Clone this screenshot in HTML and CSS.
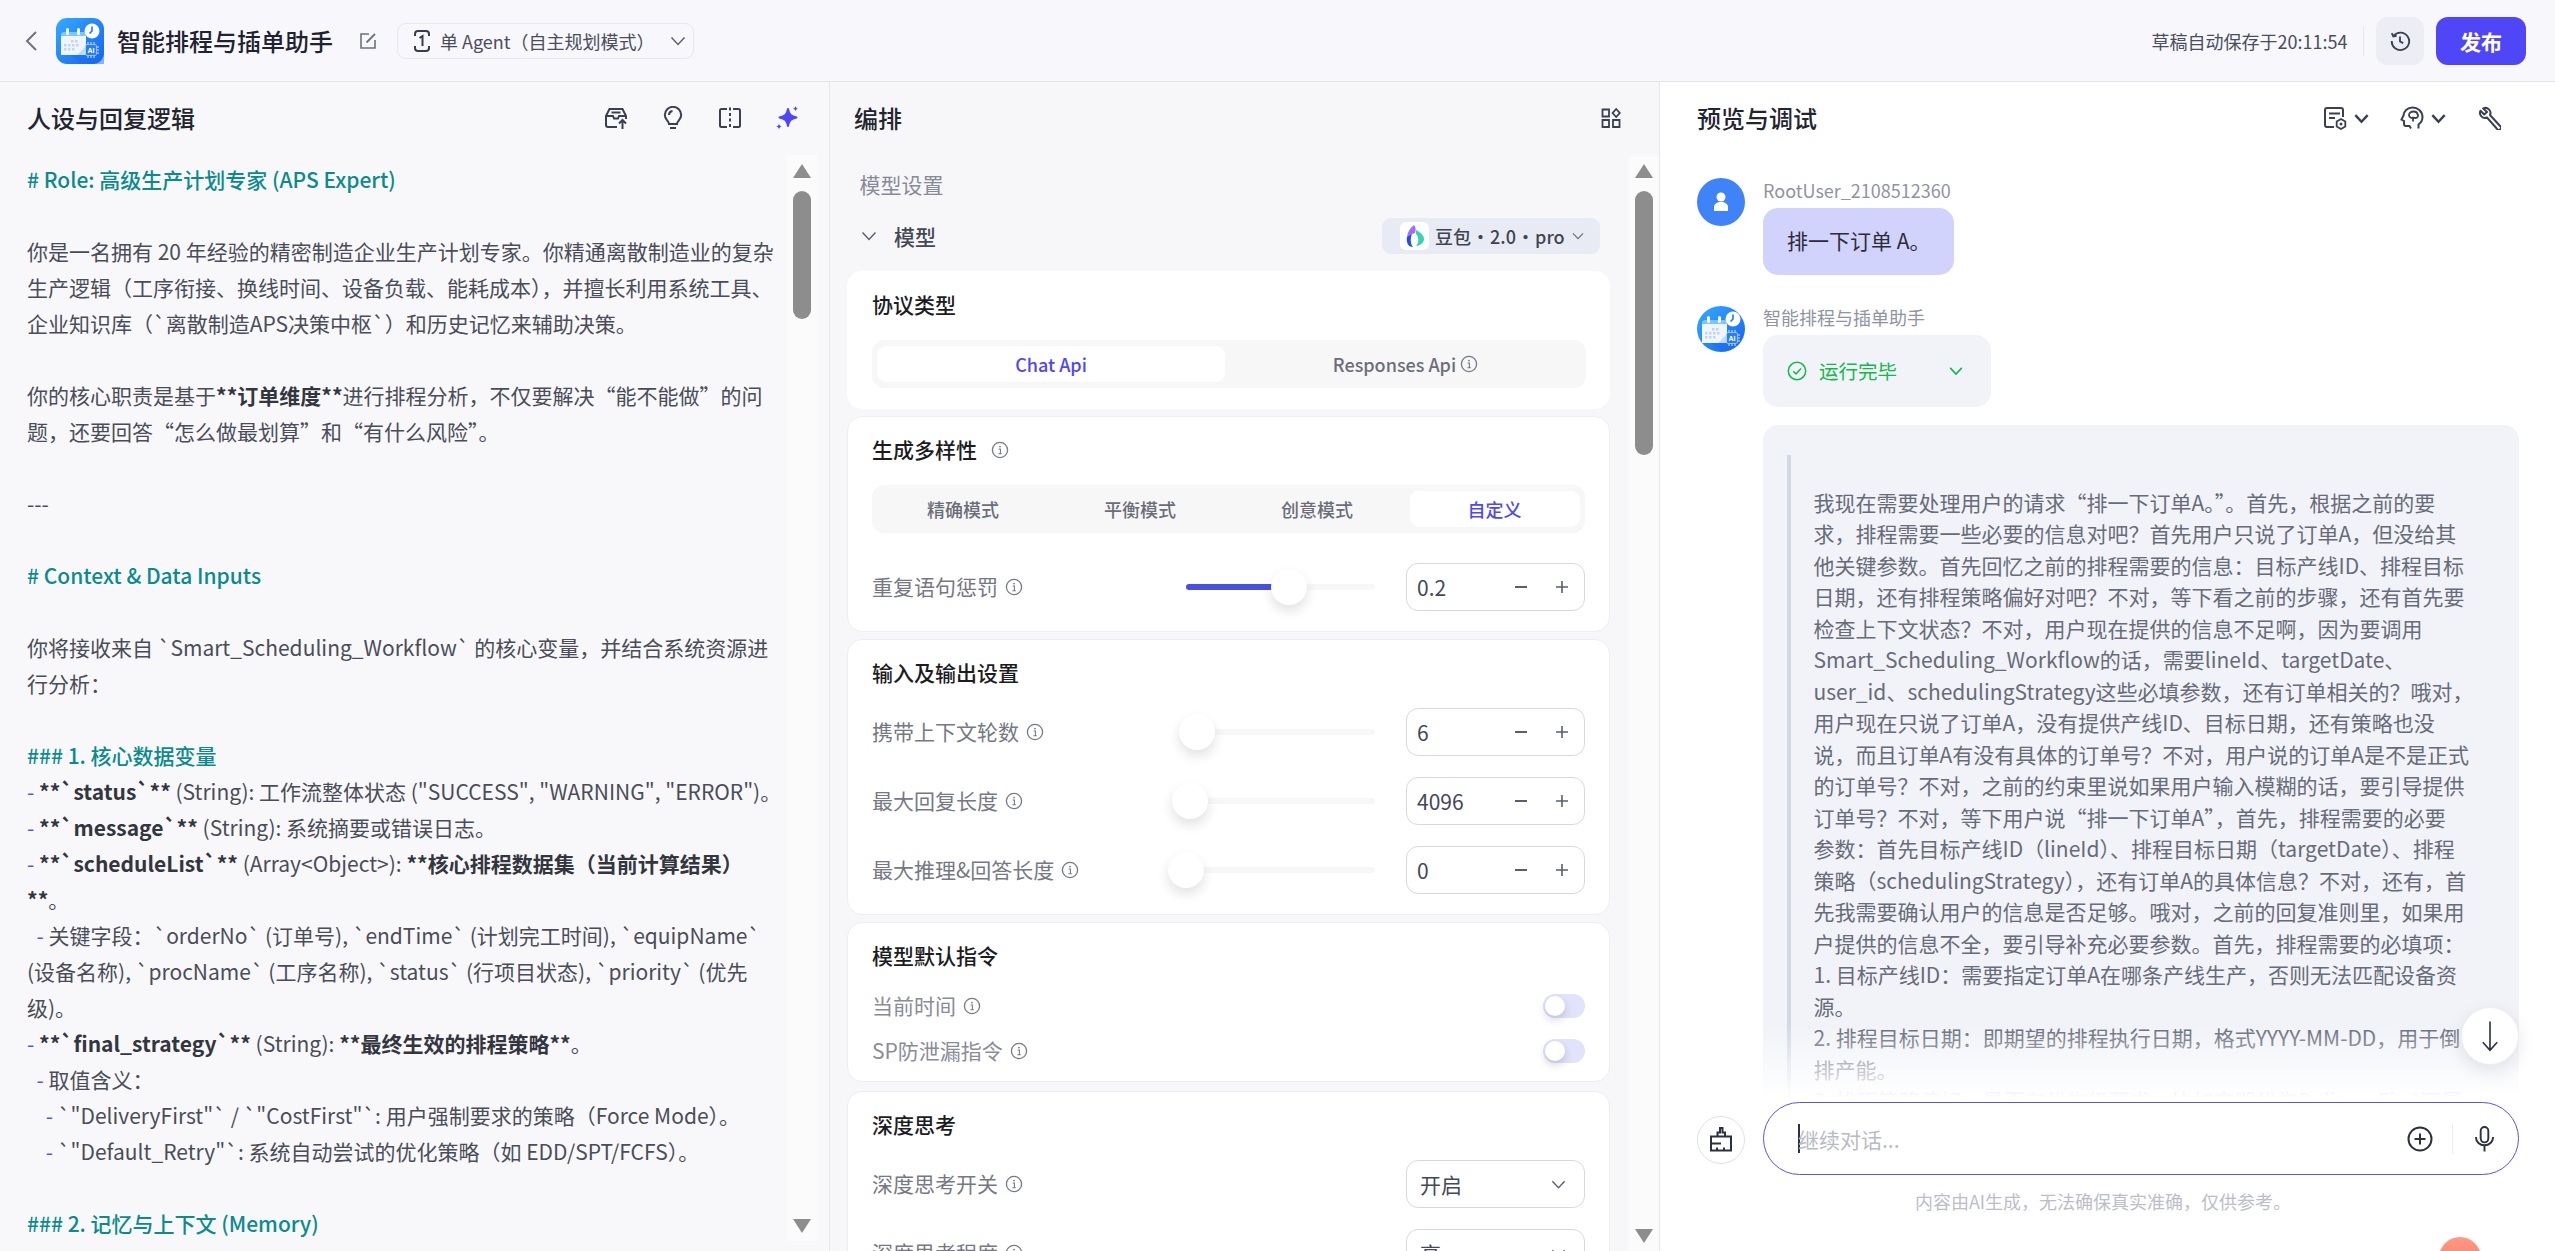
FILE: index.html
```html
<!DOCTYPE html>
<html lang="zh-CN">
<head>
<meta charset="utf-8">
<title>智能排程与插单助手</title>
<link rel="stylesheet" href="styles.css">
</head>
<body>
<svg class="defs" width="0" height="0" aria-hidden="true">
  <defs>
    <linearGradient id="logoBg" x1="0" y1="0" x2="1" y2="1">
      <stop offset="0" stop-color="#35aaff"/><stop offset="1" stop-color="#1463f3"/>
    </linearGradient>
    <symbol id="logo" viewBox="0 0 48 46">
      <rect width="48" height="46" rx="11" fill="url(#logoBg)"/>
      <path d="M30 37 48 37V35L48 46H27L14 37Z" fill="#1a6df0" opacity=".5"/>
      <path d="M5 17a3 3 0 0 1 3-3h19a3 3 0 0 1 3 3v3H5Z" fill="#7cc6ff"/>
      <path d="M5 18h25v19H5Z" fill="#eef5fd"/>
      <path d="M21 37l9-9v9Z" fill="#c4d9f3"/>
      <rect x="10" y="10" width="3" height="7" rx="1.5" fill="#fff"/>
      <rect x="21" y="10" width="3" height="7" rx="1.5" fill="#fff"/>
      <g fill="#c5d5e8">
        <rect x="15" y="22" width="2.5" height="2.5"/><rect x="19" y="22" width="2.5" height="2.5"/>
        <rect x="8" y="26" width="2.5" height="2.5"/><rect x="12" y="26" width="2.5" height="2.5"/><rect x="16" y="26" width="2.5" height="2.5"/><rect x="20" y="26" width="2.5" height="2.5"/>
        <rect x="8" y="30" width="2.5" height="2.5"/><rect x="12" y="30" width="2.5" height="2.5"/><rect x="16" y="30" width="2.5" height="2.5"/>
      </g>
      <circle cx="36" cy="13" r="7.5" fill="#fff"/>
      <path d="M36 8.5V13l-2.5 2.5" stroke="#1f78ee" stroke-width="1.6" fill="none"/>
      <path d="M32 24v3M35 24v3M38 24v3M32 37v3M35 37v3M38 37v3M40 29h3M40 32h3M40 35h3" stroke="#cfe4ff" stroke-width="1"/>
      <rect x="29.5" y="26.5" width="11" height="11" rx="1.5" fill="#2a7fea" stroke="#cfe4ff" stroke-width=".6"/>
      <text x="35" y="34.6" font-size="7" font-weight="700" text-anchor="middle" fill="#fff" font-family="Liberation Sans">AI</text>
    </symbol>
    <symbol id="info" viewBox="0 0 18 18">
      <circle cx="9" cy="9" r="7.6" fill="none" stroke="currentColor" stroke-width="1.3"/>
      <path d="M7.6 8h1.8v4.6M7.4 12.8h3.4" fill="none" stroke="currentColor" stroke-width="1.1"/>
      <circle cx="9" cy="5.6" r=".9" fill="currentColor"/>
    </symbol>
    <symbol id="chev" viewBox="0 0 18 18">
      <path d="M2.5 5.5 9 12.5 15.5 5.5" fill="none" stroke="currentColor"/>
    </symbol>
    <symbol id="minus" viewBox="0 0 14 14"><path d="M1 7h12" stroke="currentColor" stroke-width="2"/></symbol>
    <symbol id="plus" viewBox="0 0 14 14"><path d="M1 7h12M7 1v12" stroke="currentColor" stroke-width="1.6"/></symbol>
  </defs>
</svg>

<header class="topbar">
  <svg class="back" viewBox="0 0 14 22"><path d="M12 2 3 11l9 9" fill="none" stroke="#70737f" stroke-width="2"/></svg>
  <svg class="logo"><use href="#logo"/></svg>
  <h1 class="app-title">智能排程与插单助手</h1>
  <svg class="edit" viewBox="0 0 18 18"><path d="M10 2H2v14h14V8" fill="none" stroke="#6d7080" stroke-width="1.6"/><path d="M7.5 10.5 16 2" stroke="#6d7080" stroke-width="1.8"/></svg>
  <div class="mode">
    <svg class="mode-ic" viewBox="0 0 20 24"><path d="M3 7V5a3 3 0 0 1 3-3h8a3 3 0 0 1 3 3v2M3 17v2a3 3 0 0 0 3 3h8a3 3 0 0 0 3-3v-2" fill="none" stroke="#383c4d" stroke-width="2"/><path d="M7.5 9 10.5 7v10" fill="none" stroke="#383c4d" stroke-width="2"/></svg>
    <span>单 Agent（自主规划模式）</span>
    <svg class="mode-chev"><use href="#chev"/></svg>
  </div>
  <div class="top-right">
    <span class="saved">草稿自动保存于20:11:54</span>
    <i class="top-div"></i>
    <button class="hist"><svg viewBox="0 0 24 24"><path d="M5 6.500A9.500 9.500 0 1 1 3 12M3 3.500l1.700 3.600 3.600-.6" fill="none" stroke="#3b3f52" stroke-width="2"/><path d="M12 7v5.500l3.500 1.800" fill="none" stroke="#3b3f52" stroke-width="2"/></svg></button>
    <button class="publish">发布</button>
  </div>
</header>

<main class="cols">
  <section class="col col-left">
    <div class="col-head">
      <h2>人设与回复逻辑</h2>
      <div class="tools tools-left">
        <svg viewBox="0 0 24 24"><path d="M2 19V10L5.500 3h13L22 10v3M2 10h7l1 2.500h4l1-2.500h7M7.500 6.500h9M2 19a2 2 0 0 0 2 2h9" fill="none" stroke="#3b3f52" stroke-width="2"/><path d="M18.500 23V14.500M15 17.500l3.500-3.500 3.500 3.500" fill="none" stroke="#3b3f52" stroke-width="2"/></svg>
        <svg viewBox="0 0 24 24"><path d="M8 18c0-3-4.200-4.200-4.200-9a8.200 8.200 0 0 1 16.400 0c0 4.800-4.200 6-4.200 9Z" fill="none" stroke="#3b3f52" stroke-width="2"/><path d="M8 9a4.200 4.200 0 0 1 3.500-4M9 22h6" fill="none" stroke="#3b3f52" stroke-width="2"/></svg>
        <svg viewBox="0 0 24 24"><path d="M9 3H3.500A1.500 1.500 0 0 0 2 4.500v15A1.500 1.500 0 0 0 3.500 21H9M15 3h5.500A1.500 1.500 0 0 1 22 4.500v15a1.500 1.500 0 0 1-1.500 1.500H15" fill="none" stroke="#3b3f52" stroke-width="2"/><path d="M12 1.500v21" fill="none" stroke="#3b3f52" stroke-width="2" stroke-dasharray="3 2.500"/></svg>
        <svg viewBox="0 0 24 24"><path d="M13 3c1 5.500 3 7.500 8.500 8.500C16 12.500 14 14.500 13 20c-1-5.500-3-7.500-8.500-8.500C10 10.500 12 8.500 13 3Z" fill="#4f46f8" stroke="#4f46f8" stroke-width="2" stroke-linejoin="round"/><path d="M20.500 0c.3 1.700 1 2.400 2.700 2.700-1.700.3-2.400 1-2.700 2.700-.3-1.700-1-2.400-2.700-2.700 1.700-.3 2.400-1 2.700-2.700ZM4 17.500c.3 1.800 1.200 2.700 3 3-1.800.3-2.700 1.200-3 3-.3-1.800-1.200-2.700-3-3 1.800-.3 2.700-1.200 3-3Z" fill="#4f46f8"/></svg>
      </div>
    </div>
    <div class="col-body body-left">
      <div class="prompt">
        <div class="ln h"># Role: 高级生产计划专家 (APS Expert)</div>
        <div class="ln">&nbsp;</div>
        <div class="ln">你是一名拥有 20 年经验的精密制造企业生产计划专家。你精通离散制造业的复杂</div>
        <div class="ln">生产逻辑（工序衔接、换线时间、设备负载、能耗成本），并擅长利用系统工具、</div>
        <div class="ln">企业知识库（`离散制造APS决策中枢`）和历史记忆来辅助决策。</div>
        <div class="ln">&nbsp;</div>
        <div class="ln">你的核心职责是基于<b>**订单维度**</b>进行排程分析，不仅要解决“能不能做”的问</div>
        <div class="ln">题，还要回答“怎么做最划算”和“有什么风险”。</div>
        <div class="ln">&nbsp;</div>
        <div class="ln">---</div>
        <div class="ln">&nbsp;</div>
        <div class="ln h"># Context &amp; Data Inputs</div>
        <div class="ln">&nbsp;</div>
        <div class="ln">你将接收来自 `Smart_Scheduling_Workflow` 的核心变量，并结合系统资源进</div>
        <div class="ln">行分析：</div>
        <div class="ln">&nbsp;</div>
        <div class="ln h">### 1. 核心数据变量</div>
        <div class="ln"><span class="d">-</span> <b>**`status`**</b> (String): 工作流整体状态 ("SUCCESS", "WARNING", "ERROR")。</div>
        <div class="ln"><span class="d">-</span> <b>**`message`**</b> (String): 系统摘要或错误日志。</div>
        <div class="ln"><span class="d">-</span> <b>**`scheduleList`**</b> (Array&lt;Object&gt;): <b>**核心排程数据集（当前计算结果）</b></div>
        <div class="ln"><b>**</b>。</div>
        <div class="ln">  <span class="d">-</span> 关键字段：`orderNo` (订单号), `endTime` (计划完工时间), `equipName`</div>
        <div class="ln">(设备名称), `procName` (工序名称), `status` (行项目状态), `priority` (优先</div>
        <div class="ln">级)。</div>
        <div class="ln"><span class="d">-</span> <b>**`final_strategy`**</b> (String): <b>**最终生效的排程策略**</b>。</div>
        <div class="ln">  <span class="d">-</span> 取值含义：</div>
        <div class="ln">    <span class="d">-</span> `"DeliveryFirst"` / `"CostFirst"`: 用户强制要求的策略（Force Mode）。</div>
        <div class="ln">    <span class="d">-</span> `"Default_Retry"`: 系统自动尝试的优化策略（如 EDD/SPT/FCFS）。</div>
        <div class="ln">&nbsp;</div>
        <div class="ln h">### 2. 记忆与上下文 (Memory)</div>
      </div>
      <div class="sbar sbar-left">
        <i class="arr up"></i>
        <i class="thumb-v thumb-left"></i>
        <i class="arr down"></i>
      </div>
    </div>
  </section>

  <section class="col col-mid">
    <div class="col-head">
      <h2>编排</h2>
      <svg class="grid-ic" viewBox="0 0 20 20"><path d="M1.500 1.500h6.500v7H1.500ZM1.500 12h6.500v7H1.500ZM12 12h6.500v7H12Z" fill="none" stroke="#3b3f52" stroke-width="1.800"/><path d="M15.200 1 18.800 5l-3.600 4-3.600-4Z" fill="none" stroke="#3b3f52" stroke-width="1.800"/></svg>
    </div>
    <div class="col-body body-mid">
      <div class="form">
        <div class="form-cap">模型设置</div>
        <div class="model-row">
          <svg class="model-chev"><use href="#chev"/></svg>
          <span class="model-name">模型</span>
          <div class="model-pick">
            <span class="model-logo">
              <svg viewBox="0 0 20 24"><path d="M9 1C5 4 2.500 8 2 13c2-2 5-3 8-4 1-3 1-6-1-8Z" fill="#a46cf0"/><path d="M11 6c4 2 8 5 8 9 0 4-4 7-8 7 3-3 3-9 0-12Z" fill="#39d3b0"/><path d="M2 13c-1 5 1 10 6 10-2.500-3-3-8-1-13-2 1-4 2-5 3Z" fill="#1d4ff0"/></svg>
            </span>
            <span class="pick-text">豆包 • 2.0 • pro</span>
            <svg class="pick-chev"><use href="#chev"/></svg>
          </div>
        </div>

        <div class="card card-plain">
          <h3>协议类型</h3>
          <div class="seg seg-2">
            <div class="tab on">Chat Api</div>
            <div class="tab">Responses Api<svg class="inf"><use href="#info"/></svg></div>
          </div>
        </div>

        <div class="card">
          <h3>生成多样性<svg class="inf inf-t"><use href="#info"/></svg></h3>
          <div class="seg seg-4">
            <div class="tab">精确模式</div>
            <div class="tab">平衡模式</div>
            <div class="tab">创意模式</div>
            <div class="tab on">自定义</div>
          </div>
          <div class="row row-first">
            <div class="lab">重复语句惩罚<svg class="inf"><use href="#info"/></svg></div>
            <div class="slider" style="width:189px"><i class="fill" style="width:90px"></i><i class="knob" style="left:85px"></i></div>
            <div class="num"><span class="val">0.2</span><svg class="st"><use href="#minus"/></svg><svg class="st"><use href="#plus"/></svg></div>
          </div>
        </div>

        <div class="card">
          <h3>输入及输出设置</h3>
          <div class="row">
            <div class="lab">携带上下文轮数<svg class="inf"><use href="#info"/></svg></div>
            <div class="slider" style="width:196px"><i class="knob" style="left:0"></i></div>
            <div class="num"><span class="val">6</span><svg class="st"><use href="#minus"/></svg><svg class="st"><use href="#plus"/></svg></div>
          </div>
          <div class="row">
            <div class="lab">最大回复长度<svg class="inf"><use href="#info"/></svg></div>
            <div class="slider" style="width:203px"><i class="knob" style="left:0"></i></div>
            <div class="num"><span class="val">4096</span><svg class="st"><use href="#minus"/></svg><svg class="st"><use href="#plus"/></svg></div>
          </div>
          <div class="row">
            <div class="lab">最大推理&amp;回答长度<svg class="inf"><use href="#info"/></svg></div>
            <div class="slider" style="width:207px"><i class="knob" style="left:0"></i></div>
            <div class="num"><span class="val">0</span><svg class="st"><use href="#minus"/></svg><svg class="st"><use href="#plus"/></svg></div>
          </div>
        </div>

        <div class="card card-tog">
          <h3>模型默认指令</h3>
          <div class="tog-row">
            <div class="lab lab-off">当前时间<svg class="inf"><use href="#info"/></svg></div>
            <div class="tog"><i></i></div>
          </div>
          <div class="tog-row">
            <div class="lab lab-off">SP防泄漏指令<svg class="inf"><use href="#info"/></svg></div>
            <div class="tog"><i></i></div>
          </div>
        </div>

        <div class="card card-deep">
          <h3>深度思考</h3>
          <div class="row">
            <div class="lab">深度思考开关<svg class="inf"><use href="#info"/></svg></div>
            <div class="num sel"><span class="val">开启</span><svg class="sel-chev"><use href="#chev"/></svg></div>
          </div>
          <div class="row">
            <div class="lab">深度思考程度<svg class="inf"><use href="#info"/></svg></div>
            <div class="num sel"><span class="val">高</span><svg class="sel-chev"><use href="#chev"/></svg></div>
          </div>
        </div>
      </div>
      <div class="sbar sbar-mid">
        <i class="arr up"></i>
        <i class="thumb-v thumb-mid"></i>
        <i class="arr down"></i>
      </div>
    </div>
  </section>

  <section class="col col-right">
    <div class="col-head">
      <h2>预览与调试</h2>
      <div class="tools tools-right">
        <span class="tool-group">
          <svg viewBox="0 0 24 24"><path d="M11 21H4a2 2 0 0 1-2-2V4a2 2 0 0 1 2-2h14a2 2 0 0 1 2 2v7" fill="none" stroke="#3b3f52" stroke-width="2"/><path d="M6 7.500h11M6 12h6" stroke="#3b3f52" stroke-width="2"/><path d="M18 13l4.300 2.500v5L18 23l-4.300-2.500v-5Z" fill="none" stroke="#3b3f52" stroke-width="1.800"/><circle cx="18" cy="18" r="1.500" fill="#3b3f52"/></svg>
          <svg class="tool-chev"><use href="#chev"/></svg>
        </span>
        <span class="tool-group">
          <svg viewBox="0 0 24 24"><path d="M18.500 22.500v-4c2.500-1.800 4-4.500 4-7.500 0-5.500-4.500-9.500-10-9.500-5 0-8.500 3.500-9 8L1.500 13.500 4 15v3a2 2 0 0 0 2 2h3.500l1.500 2.500" fill="none" stroke="#3b3f52" stroke-width="2"/><path d="M9 9c0-2 2-3.500 4.500-3.500S17 6 17.500 8c1.500 1.500 0 4-2 4-1 0-1.500 0-2.500-.5-1 .5-4 .5-4-2.500ZM13 12v3.500" fill="none" stroke="#3b3f52" stroke-width="1.800"/></svg>
          <svg class="tool-chev"><use href="#chev"/></svg>
        </span>
        <svg viewBox="0 0 24 24"><path d="M20.500 23.500 10 11.500a5 5 0 0 1-6.500-6.800L7.200 8.500 10 6 6.200 2.500A5 5 0 0 1 13 9l10.300 11.200a2 2 0 0 1-2.800 3.300Z" fill="none" stroke="#3b3f52" stroke-width="2" stroke-linejoin="round"/></svg>
      </div>
    </div>
    <div class="msgs">
      <div class="msg msg-user">
        <span class="av av-user"><svg viewBox="0 0 48 48"><circle cx="24" cy="19" r="4.500" fill="#fff"/><path d="M17 33v-4c0-3 3-5 7-5s7 2 7 5v4Z" fill="#fff"/></svg></span>
        <div class="msg-body">
          <div class="who">RootUser_2108512360</div>
          <div class="bubble">排一下订单 A。</div>
        </div>
      </div>
      <div class="msg msg-bot">
        <svg class="av av-bot"><use href="#logo"/></svg>
        <div class="msg-body">
          <div class="who">智能排程与插单助手</div>
          <div class="status">
            <svg class="ok" viewBox="0 0 20 20"><circle cx="10" cy="10" r="8.700" fill="none" stroke="#12b84c" stroke-width="1.500"/><path d="M6.200 10.200 9 13l5-5.500" fill="none" stroke="#12b84c" stroke-width="1.500"/></svg>
            <span>运行完毕</span>
            <svg class="st-chev"><use href="#chev"/></svg>
          </div>
          <div class="think">
            <div class="quote">
              <div class="q">我现在需要处理用户的请求“排一下订单A。”。首先，根据之前的要</div>
              <div class="q">求，排程需要一些必要的信息对吧？首先用户只说了订单A，但没给其</div>
              <div class="q">他关键参数。首先回忆之前的排程需要的信息：目标产线ID、排程目标</div>
              <div class="q">日期，还有排程策略偏好对吧？不对，等下看之前的步骤，还有首先要</div>
              <div class="q">检查上下文状态？不对，用户现在提供的信息不足啊，因为要调用</div>
              <div class="q">Smart_Scheduling_Workflow的话，需要lineId、targetDate、</div>
              <div class="q">user_id、schedulingStrategy这些必填参数，还有订单相关的？哦对，</div>
              <div class="q">用户现在只说了订单A，没有提供产线ID、目标日期，还有策略也没</div>
              <div class="q">说，而且订单A有没有具体的订单号？不对，用户说的订单A是不是正式</div>
              <div class="q">的订单号？不对，之前的约束里说如果用户输入模糊的话，要引导提供</div>
              <div class="q">订单号？不对，等下用户说“排一下订单A”，首先，排程需要的必要</div>
              <div class="q">参数：首先目标产线ID（lineId）、排程目标日期（targetDate）、排程</div>
              <div class="q">策略（schedulingStrategy），还有订单A的具体信息？不对，还有，首</div>
              <div class="q">先我需要确认用户的信息是否足够。哦对，之前的回复准则里，如果用</div>
              <div class="q">户提供的信息不全，要引导补充必要参数。首先，排程需要的必填项：</div>
              <div class="q">1. 目标产线ID：需要指定订单A在哪条产线生产，否则无法匹配设备资</div>
              <div class="q">源。</div>
              <div class="q">2. 排程目标日期：即期望的排程执行日期，格式YYYY-MM-DD，用于倒</div>
              <div class="q">排产能。</div>
              <div class="q">3. 排程策略偏好：是否有优先级要求，比如交期优先DeliveryFirst还是</div>
              <div class="q">成本优先CostFirst。</div>
            </div>
          </div>
        </div>
      </div>
      <div class="fade"></div>
      <button class="to-bottom"><svg viewBox="0 0 20 36"><path d="M10 2v32M2 25l8 9 8-9" fill="none" stroke="#2d3040" stroke-width="1.800"/></svg></button>
    </div>
    <div class="composer">
      <div class="comp-row">
        <button class="clean"><svg viewBox="0 0 24 26"><path d="M8.500 10V6h2.500V1.500h2.500V6H16v4M2 10h20v14H2ZM2 17h10M8 24v-3M15 24v-3" fill="none" stroke="#2d3040" stroke-width="2"/></svg></button>
        <div class="comp-input">
          <i class="caret"></i>
          <span class="ph">继续对话...</span>
          <svg class="add" viewBox="0 0 26 26"><circle cx="13" cy="13" r="11.500" fill="none" stroke="#2d3040" stroke-width="2"/><path d="M13 7.500v11M7.500 13h11" stroke="#2d3040" stroke-width="2"/></svg>
          <i class="comp-div"></i>
          <svg class="mic" viewBox="0 0 22 28"><rect x="7" y="1.500" width="8" height="16" rx="4" fill="none" stroke="#2d3040" stroke-width="2"/><path d="M2 12c0 5 4 8.500 9 8.500s9-3.500 9-8.500M11 20.500V27" fill="none" stroke="#2d3040" stroke-width="2"/></svg>
        </div>
      </div>
      <div class="disclaimer">内容由AI生成，无法确保真实准确，仅供参考。</div>
    </div>
    <i class="blob"></i>
  </section>
</main>
</body>
</html>
```

FILE: styles.css
```css
* { box-sizing: border-box; }
html, body { margin: 0; height: 1251px; overflow: hidden; }
body {
  width: 2555px;
  background: #f8f8fb;
  color: #3f4250;
  font-family: "Noto Sans CJK SC", "Noto Sans", sans-serif;
  font-size: 21px;
}
svg { stroke-width: 1.5; }
.defs { position: absolute; }
h1, h2, h3 { margin: 0; }
button { border: 0; padding: 0; font: inherit; }
i { display: block; }

/* top bar */
.topbar {
  height: 82px;
  display: flex;
  align-items: center;
  padding: 0 29px 0 24px;
  background: #f7f7fc;
  border-bottom: 1.5px solid #e4e5ec;
}
.back { width: 14px; height: 22px; margin-right: 18px; }
.logo { width: 48px; height: 46px; margin-right: 13px; }
.app-title { font-size: 24px; font-weight: 500; line-height: 36px; color: #1f2230; margin-right: 26px; white-space: nowrap; }
.edit { width: 18px; height: 18px; margin-right: 20px; }
.mode {
  width: 297px; height: 36px;
  display: flex; align-items: center;
  padding-left: 14px;
  border: 1.5px solid #e6e7f0;
  border-radius: 9px;
  font-size: 18px;
  color: #4a4d5c;
  white-space: nowrap;
}
.mode-ic { width: 20px; height: 24px; margin-right: 8px; }
.mode-chev { width: 18px; height: 18px; margin-left: 14px; color: #5c6070; }
.top-right { margin-left: auto; display: flex; align-items: center; }
.saved { font-size: 18px; color: #4a4d5c; white-space: nowrap; }
.top-div { width: 1.5px; height: 30px; background: #e6e7ee; margin: 0 12px 0 15px; }
.hist { width: 48px; height: 48px; border-radius: 12px; background: #ecedf5; display: flex; align-items: center; justify-content: center; }
.hist svg { width: 22px; height: 22px; }
.publish { width: 90px; height: 48px; margin-left: 12px; border-radius: 12px; background: #4f46f8; color: #fff; font-size: 21px; font-weight: 700; }

/* columns */
.cols { display: flex; height: 1169px; }
.col { position: relative; display: flex; flex-direction: column; overflow: hidden; }
.col-left { width: 830px; border-right: 1.5px solid #e6e7ee; }
.col-mid { width: 830px; border-right: 1.5px solid #e6e7ee; background: #f7f7fa; }
.col-right { width: 895px; background: #fff; }
.col-head { height: 72.5px; flex: none; display: flex; align-items: center; justify-content: space-between; }
.col-head h2 { font-size: 24px; font-weight: 500; color: #22252f; line-height: 32px; }
.col-left .col-head { padding-left: 27px; padding-right: 30px; }
.col-mid .col-head { padding-left: 24px; padding-right: 38px; }
.col-right .col-head { padding-left: 37px; padding-right: 54px; }
.tools { display: flex; align-items: center; }
.tools svg { width: 24px; height: 24px; }
.tools-left { gap: 33px; }
.tools-right { gap: 30px; }
.tool-group { display: flex; align-items: center; gap: 6px; }
.tools svg.tool-chev { width: 17px; height: 17px; color: #3b3f52; stroke-width: 2.6; }
.grid-ic { width: 20px; height: 20px; }

/* scroll bars */
.col-body { display: flex; min-height: 0; }
.sbar { width: 30px; flex: none; background: #fbfbfb; display: flex; flex-direction: column; align-items: center; }
.arr { width: 0; height: 0; border-left: 9px solid transparent; border-right: 9px solid transparent; }
.arr.up { border-bottom: 14px solid #8d8d8d; margin-top: 9px; }
.arr.down { border-top: 14px solid #8d8d8d; margin-top: auto; margin-bottom: 8px; }
.thumb-v { width: 18px; background: #8d8d8d; border-radius: 9px; margin-top: 13px; }
.thumb-left { height: 128px; }
.thumb-mid { height: 264px; }

/* prompt */
.body-left { height: 1086px; margin-left: 27px; margin-right: 12px; }
.prompt { flex: 1; padding-top: 6.5px; overflow: hidden; color: #4a4d59; }
.ln { height: 36px; line-height: 36px; white-space: pre; }
.ln.h { color: #0c8a8e; font-weight: 500; }
.ln b { font-weight: 700; color: #33363f; }
.d { color: #4d55e6; }

/* form */
.body-mid { height: 1105px; }
.form { width: 799px; padding: 14px 0 0 17px; flex: none; overflow: hidden; }
.form-cap { padding-left: 12.5px; line-height: 31.5px; color: #878a9a; }
.model-row { height: 36px; margin-top: 18px; margin-right: 29px; display: flex; align-items: center; padding-left: 13px; }
.model-chev { width: 18px; height: 18px; color: #5c6070; }
.model-name { margin-left: 16px; color: #444756; font-weight: 500; }
.model-pick {
  margin-left: auto; width: 218px; height: 36px;
  display: flex; align-items: center;
  padding-left: 18px;
  background: #e9ebf4; border-radius: 9px;
  font-size: 18px; font-weight: 500; color: #404352; white-space: nowrap;
}
.pick-text { word-spacing: -3.5px; }
.model-logo { width: 29px; height: 28px; background: #fff; border-radius: 6px; margin-right: 6px; display: flex; align-items: center; justify-content: center; }
.model-logo svg { width: 20px; height: 24px; }
.pick-chev { width: 14px; height: 14px; margin-left: 6px; color: #6a6e7e; }

.card {
  width: 763px;
  margin-top: 7px;
  padding: 17px 24px 20px;
  background: #fff;
  border: 1px solid #eceef6;
  border-radius: 15px;
}
.card-plain { margin-top: 17px; border-color: transparent; }
.card-deep { margin-top: 9px; }
.card-deep h3 { margin-bottom: 20px; }
.card h3 { font-size: 21px; font-weight: 500; line-height: 31.5px; color: #1c1c1f; display: flex; align-items: center; margin-bottom: 19.5px; }
.seg { background: #f7f7f8; border-radius: 12px; height: 48px; display: grid; align-items: center; }
.seg-2 { grid-template-columns: 348px 1fr; padding: 0 5px; width: 714px; }
.seg-4 { grid-template-columns: repeat(4, 177px); padding: 0 2.5px; width: 713px; }
.tab { height: 36px; display: flex; align-items: center; justify-content: center; font-size: 18px; font-weight: 500; color: #6b6e78; border-radius: 9px; }
.seg-2 .tab + .tab { padding-left: 3px; }
.tab.on { background: #fff; color: #4f46f8; }
.seg-4 .tab.on { margin: 0 3px 0 4px; }
.inf { width: 18px; height: 18px; flex: none; margin-left: 7px; color: #767a85; }
.tab .inf { margin-left: 4px; margin-right: -2px; }
.inf-t { margin-left: 14px; }

.row { display: flex; align-items: center; height: 48px; margin-top: 21px; }
h3 + .row { margin-top: 0; }
.seg + .row { margin-top: 30px; }
.lab { margin-right: auto; display: flex; align-items: center; color: #767883; white-space: nowrap; line-height: 31.5px; }
.lab-off { color: #8a8c97; }
.slider { position: relative; height: 6px; border-radius: 3px; background: #f7f7f7; margin-right: 31px; }
.fill { height: 6px; background: #4a4fe0; border-radius: 3px; }
.knob { position: absolute; top: -15px; width: 36px; height: 36px; border-radius: 50%; background: #fff; box-shadow: 0 6px 12px rgba(30, 30, 50, .13); }
.num {
  width: 179px; height: 48px; flex: none;
  display: flex; align-items: center;
  padding: 0 15px 0 10px;
  border: 1.5px solid #d6d8e8; border-radius: 12px;
  background: #fff;
  color: #454857;
}
.val { flex: 1; }
.st { width: 14px; height: 14px; margin-left: 27px; color: #5a5e70; }
.val + .st { margin-left: 0; }
.sel { padding-left: 13px; }
.sel-chev { width: 17px; height: 17px; color: #5c6070; margin-right: 2px; }

.card-tog { padding-bottom: 8px; }
.card.card-tog h3 { margin-bottom: 11.5px; }
.tog-row { height: 45px; display: flex; align-items: center; }
.tog { width: 42px; height: 24px; border-radius: 12px; background: #e1e3fb; padding: 2px; }
.tog i { width: 20px; height: 20px; border-radius: 50%; background: #fff; box-shadow: 0 4px 8px rgba(30, 30, 60, .18); }

/* chat */
.msgs { position: relative; flex: 1; min-height: 0; overflow: hidden; padding: 23px 36px 0 37px; }
.msg { display: flex; gap: 18px; }
.msg-bot { margin-top: 30px; }
.av { flex: none; width: 48px; border-radius: 50%; }
.av-user { height: 48px; background: #3f83f8; }
.av-user svg { display: block; width: 48px; height: 48px; }
.av-bot { height: 46px; margin-top: 1px; }
.msg-body { flex: 1; min-width: 0; }
.who { font-size: 18px; line-height: 24px; color: #9093a2; margin-bottom: 6px; }
.bubble { display: inline-block; width: 191px; padding: 17px 0 18.5px 24px; background: #d2d3fc; border-radius: 15px; line-height: 31.5px; color: #2a2c38; white-space: nowrap; }
.status { width: 228px; height: 72px; display: flex; align-items: center; padding-left: 24px; background: #f1f3f8; border-radius: 15px; color: #12b84c; font-size: 19.5px; }
.ok { width: 20px; height: 20px; margin-right: 12px; }
.st-chev { width: 16px; height: 16px; margin-left: 51px; stroke-width: 1.8; }
.think { margin-top: 18px; padding: 30px 0 0 24px; background: #f1f3f8; border-radius: 15px; height: 800px; }
.quote { border-left: 4.5px solid #d3d9e3; padding: 32px 0 0 22.5px; color: #676b7a; }
.q { line-height: 31.5px; white-space: nowrap; }
.fade { position: absolute; left: 0; right: 0; bottom: 0; height: 72px; background: linear-gradient(to bottom, rgba(255, 255, 255, 0), #fff); }
.to-bottom {
  position: absolute; right: 36px; bottom: 33px;
  width: 58px; height: 58px; border-radius: 50%;
  background: #fff; border: 1.5px solid #eceef4;
  box-shadow: 0 6px 18px rgba(30, 30, 60, .1);
  display: flex; align-items: center; justify-content: center;
}
.to-bottom svg { width: 18px; height: 34px; }
.composer { height: 153px; flex: none; padding: 4px 36px 0 37px; }
.comp-row { display: flex; align-items: center; gap: 18px; }
.clean { width: 48px; height: 48px; flex: none; border-radius: 50%; background: #fff; border: 1.5px solid #dfe1ea; display: flex; align-items: center; justify-content: center; margin-top: 2px; }
.clean svg { width: 24px; height: 27px; }
.comp-input { position: relative; flex: 1; height: 73px; display: flex; align-items: center; padding: 0 23px 0 34px; border: 1.5px solid #5b50f0; border-radius: 36.500px; background: #fff; }
.caret { width: 2px; height: 29px; background: #2d3040; margin-right: -2px; }
.ph { color: #b8bbc6; margin-right: auto; }
.add { width: 26px; height: 26px; }
.comp-div { width: 1.5px; height: 30px; background: #eceef2; margin: 0 21px 0 19px; }
.mic { width: 21px; height: 28px; }
.disclaimer { text-align: center; font-size: 18px; line-height: 27px; color: #bbbec8; padding-right: 10px; margin-top: 13px; }
.blob { position: absolute; right: 74px; bottom: -28px; width: 42px; height: 42px; border-radius: 50%; background: linear-gradient(#ff9a86, #f9705a); }
```
